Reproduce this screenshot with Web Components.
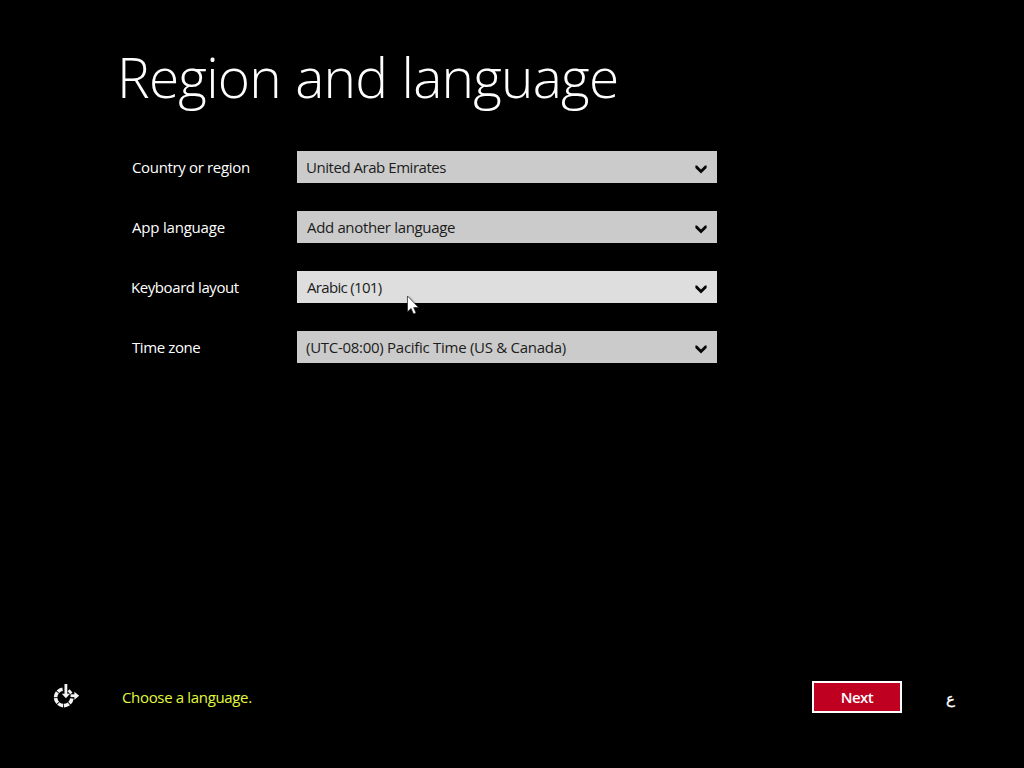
<!DOCTYPE html>
<html lang="en">
<head>
<meta charset="utf-8">
<title>Region and language</title>
<style>
    html, body {
        height: 100%;
        margin: 0;
        background: #000;
        overflow: hidden;
    }
</style>
</head>
<body>
<setup-page>
    <span slot="title">Region and language</span>
    <setting-row label="Country or region" style="--label-track: -0.34px">
        <drop-down style="--track: -0.46px">United Arab Emirates</drop-down>
    </setting-row>
    <setting-row label="App language" style="--label-track: -0.2px">
        <drop-down style="--inset: 10px; --track: -0.34px">Add another language</drop-down>
    </setting-row>
    <setting-row label="Keyboard layout" style="--label-track: -0.42px; --label-shift: -1px">
        <drop-down active style="--inset: 10px; --track: -0.68px">Arabic (101)</drop-down>
    </setting-row>
    <setting-row label="Time zone" style="--label-track: -0.4px">
        <drop-down style="--track: -0.28px">(UTC-08:00) Pacific Time (US &amp; Canada)</drop-down>
    </setting-row>
    <setup-footer slot="footer">
        <ease-icon slot="start"></ease-icon>
        <span slot="message">Choose a language.</span>
        <next-button>Next</next-button>
        <span slot="input" lang="ar">ع</span>
    </setup-footer>
</setup-page>
<mouse-pointer></mouse-pointer>

<script>
class SetupPage extends HTMLElement {

    constructor() {
        super();
        this.shadowDOM = this.attachShadow({mode: "open"});
    }

    connectedCallback() {
        this.render();
    }

    render() {
        this.shadowDOM.innerHTML = `
        <style>
            :host {
                display: flex;
                flex-direction: column;
                box-sizing: border-box;
                height: 768px;
                width: 1024px;
                color: #fff;
                font: 15px/20px "Open Sans", "Noto Sans", sans-serif;
                white-space: nowrap;
            }
            h1 {
                margin: 0;
                padding: 39px 0 0 117px;
                height: 113px;
                box-sizing: border-box;
                font-size: 55px;
                line-height: 76px;
                font-weight: 300;
                letter-spacing: -0.78px;
                word-spacing: 0.8px;
            }
            main {
                flex: 1;
                display: flex;
                flex-direction: column;
                gap: 28px;
                padding: 38px 0 0 132px;
            }
        </style>
        <h1><slot name="title"></slot></h1>
        <main><slot></slot></main>
        <slot name="footer"></slot>
        `;
    }
}

class SettingRow extends HTMLElement {

    constructor() {
        super();
        this.shadowDOM = this.attachShadow({mode: "open"});
    }

    connectedCallback() {
        this.render();
    }

    render() {
        this.shadowDOM.innerHTML = `
        <style>
            :host {
                display: grid;
                grid-template-columns: 165px 420px;
                align-items: center;
                height: 32px;
            }
            label {
                margin-left: var(--label-shift, 0);
                letter-spacing: var(--label-track, 0);
            }
        </style>
        <label>${this.getAttribute("label")}</label>
        <slot></slot>
        `;
    }
}

class DropDown extends HTMLElement {

    constructor() {
        super();
        this.shadowDOM = this.attachShadow({mode: "open"});
    }

    connectedCallback() {
        this.render();
    }

    render() {
        this.shadowDOM.innerHTML = `
        <style>
            :host {
                display: flex;
                align-items: center;
                justify-content: space-between;
                box-sizing: border-box;
                height: 32px;
                padding: 0 10px 0 var(--inset, 9px);
                background: #cbcbcb;
                color: #1c1c1c;
            }
            :host([active]) {
                background: #dedede;
            }
            span {
                letter-spacing: var(--track, 0);
            }
            svg {
                margin-top: 4px;
            }
        </style>
        <span><slot></slot></span>
        <svg width="12" height="9" viewBox="0 0 12 9">
            <path d="M0.4 0.5L2 0.5L6 4.6L10 0.5L11.6 0.5V3L6 8.6L0.4 3Z" fill="#080808"/>
        </svg>
        `;
    }
}

class SetupFooter extends HTMLElement {

    constructor() {
        super();
        this.shadowDOM = this.attachShadow({mode: "open"});
    }

    connectedCallback() {
        this.render();
    }

    render() {
        this.shadowDOM.innerHTML = `
        <style>
            :host {
                display: grid;
                grid-template-columns: 70px 690px 90px 1fr;
                align-items: center;
                height: 32px;
                padding: 0 0 55px 52px;
            }
            .message {
                color: #e2f83c;
                letter-spacing: -0.34px;
            }
            .input {
                padding: 3px 0 0 44px;
                font-family: "DejaVu Sans", sans-serif;
                -webkit-text-stroke: 0.3px #fff;
            }
        </style>
        <slot name="start"></slot>
        <div class="message"><slot name="message"></slot></div>
        <slot></slot>
        <div class="input"><slot name="input"></slot></div>
        `;
    }
}

class NextButton extends HTMLElement {

    constructor() {
        super();
        this.shadowDOM = this.attachShadow({mode: "open"});
    }

    connectedCallback() {
        this.render();
    }

    render() {
        this.shadowDOM.innerHTML = `
        <style>
            :host {
                display: block;
            }
            button {
                display: block;
                width: 90px;
                height: 32px;
                padding: 0;
                border: 2px solid #fff;
                background: #c00020;
                color: #fff;
                font: 600 15px/20px "Open Sans", "Noto Sans", sans-serif;
                letter-spacing: -0.5px;
            }
        </style>
        <button type="button"><slot></slot></button>
        `;
    }
}

class EaseIcon extends HTMLElement {

    constructor() {
        super();
        this.shadowDOM = this.attachShadow({mode: "open"});
    }

    connectedCallback() {
        this.render();
    }

    render() {
        this.shadowDOM.innerHTML = `
        <style>
            :host {
                display: block;
                height: 28px;
            }
            svg {
                display: block;
            }
        </style>
        <svg width="28" height="28" viewBox="0 0 28 28" fill="none" stroke="#f4f4f4">
            <path d="M19.9 15.6A8.2 8.2 0 1 1 10.6 6.3" pathLength="61" stroke-width="3.6" stroke-dasharray="9 1.4"/>
            <path d="M13.9 1V12" stroke-width="2.8"/>
            <path d="M9.8 10.8H18L13.9 15.2Z" fill="#f4f4f4" stroke="none"/>
            <path d="M18.6 12.7H24" stroke-width="2.8"/>
            <path d="M22.4 8.7V16.7L27.2 12.7Z" fill="#f4f4f4" stroke="none"/>
            <path d="M16.6 7.3L19.4 10.4" stroke-width="2.8"/>
        </svg>
        `;
    }
}

class MousePointer extends HTMLElement {

    constructor() {
        super();
        this.shadowDOM = this.attachShadow({mode: "open"});
    }

    connectedCallback() {
        this.render();
    }

    render() {
        this.shadowDOM.innerHTML = `
        <style>
            :host {
                position: absolute;
                left: 407px;
                top: 295px;
            }
            svg {
                display: block;
                filter: drop-shadow(1px 1px 1px rgba(0, 0, 0, .45));
            }
        </style>
        <svg width="14" height="22" viewBox="0 0 14 22">
            <path d="M0.5 1V16.8L4.1 13.5L6.5 19L9 17.9L6.7 12.6H11.6Z" fill="#fff" stroke="#222" stroke-width=".7"/>
        </svg>
        `;
    }
}

customElements.define('setup-page', SetupPage);
customElements.define('setting-row', SettingRow);
customElements.define('drop-down', DropDown);
customElements.define('setup-footer', SetupFooter);
customElements.define('next-button', NextButton);
customElements.define('ease-icon', EaseIcon);
customElements.define('mouse-pointer', MousePointer);
</script>
</body>
</html>
